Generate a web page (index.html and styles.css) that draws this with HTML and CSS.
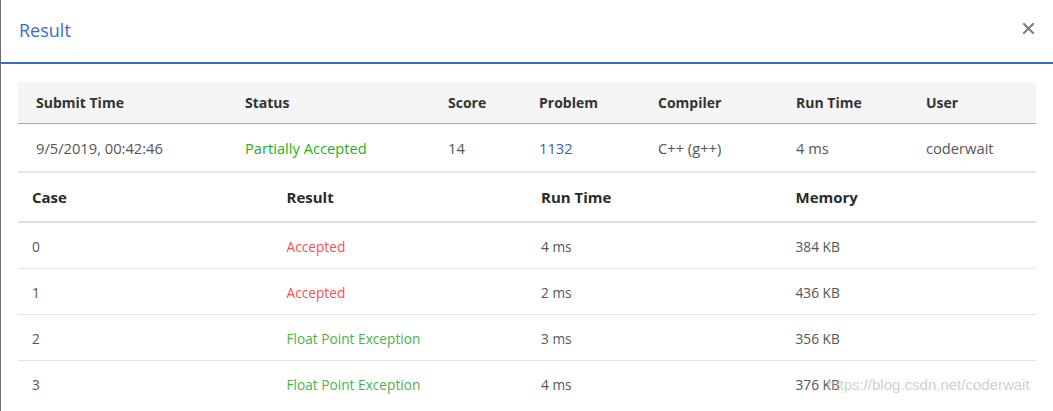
FILE: index.html
```html
<!DOCTYPE html>
<html>
<head>
<meta charset="utf-8">
<link rel="stylesheet" href="styles.css">
</head>
<body>
<div class="modal">
  <div class="modal-header">
    <span class="title">Result</span>
    <svg class="close" width="11" height="11" viewBox="0 0 11 11"><path d="M1 1L10 10M10 1L1 10" stroke="#7a7a7a" stroke-width="2" stroke-linecap="square" fill="none"/></svg>
  </div>
  <div class="modal-body">
    <table class="summary">
      <colgroup>
        <col class="c1"><col class="c2"><col class="c3"><col class="c4"><col class="c5"><col class="c6"><col class="c7">
      </colgroup>
      <thead>
        <tr><th>Submit Time</th><th>Status</th><th>Score</th><th>Problem</th><th>Compiler</th><th>Run Time</th><th>User</th></tr>
      </thead>
      <tbody>
        <tr><td>9/5/2019, 00:42:46</td><td class="partial">Partially Accepted</td><td>14</td><td class="link">1132</td><td>C++ (g++)</td><td>4 ms</td><td>coderwait</td></tr>
      </tbody>
    </table>
    <table class="cases">
      <thead>
        <tr><th>Case</th><th>Result</th><th>Run Time</th><th>Memory</th></tr>
      </thead>
      <tbody>
        <tr><td>0</td><td class="ac">Accepted</td><td>4 ms</td><td>384 KB</td></tr>
        <tr><td>1</td><td class="ac">Accepted</td><td>2 ms</td><td>436 KB</td></tr>
        <tr><td>2</td><td class="fpe">Float Point Exception</td><td>3 ms</td><td>356 KB</td></tr>
        <tr><td>3</td><td class="fpe">Float Point Exception</td><td>4 ms</td><td>376 KB</td></tr>
      </tbody>
    </table>
  </div>
  <div class="watermark">https://blog.csdn.net/coderwait</div>
</div>
</body>
</html>
```

FILE: styles.css
```css
html, body {
  margin: 0;
  padding: 0;
  background: #fff;
}
body {
  font-family: "Open Sans", "Noto Sans", sans-serif;
  color: #444;
}
.modal {
  position: relative;
  width: 1052px;
  height: 411px;
  border-left: 1px solid #6e6e6e;
  overflow: hidden;
}
.modal-header {
  height: 64px;
  border-bottom: 2px solid #3b6cc5;
  display: flex;
  align-items: center;
  justify-content: space-between;
  padding: 0 19px 0 18px;
  box-sizing: border-box;
}
.title {
  font-size: 18px;
  color: #3d6bc4;
  margin-top: -2px;
}
.close {
  display: block;
  margin-top: -6px;
}
.modal-body {
  padding: 18px 16px 0 17px;
}
table {
  width: 1018px;
  border-collapse: collapse;
  table-layout: fixed;
}
.summary thead tr {
  background: #f5f5f5;
}
.summary th {
  height: 41px;
  text-align: left;
  font-size: 14px;
  font-weight: 700;
  color: #333;
  padding: 0;
  border-bottom: 1px solid #aaa;
}
.summary td {
  height: 47px;
  font-size: 14.7px;
  color: #555;
  padding: 0;
  border-bottom: 2px solid #e4e4e4;
}
.summary th:first-child,
.summary td:first-child {
  padding-left: 18px;
}
.c1 { width: 227px; }
.c2 { width: 203px; }
.c3 { width: 91px; }
.c4 { width: 119px; }
.c5 { width: 138px; }
.c6 { width: 130px; }
.c7 { width: 110px; }
.summary td.partial { color: #1eb11e; }
.summary td.link { color: #2e63b0; }
.cases th {
  height: 48px;
  text-align: left;
  font-size: 15px;
  font-weight: 700;
  color: #2a2a2a;
  padding: 0 0 0 14px;
  border-bottom: 2px solid #dedee2;
}
.cases td {
  height: 43px;
  font-size: 13.7px;
  color: #555;
  padding: 2px 0 0 14px;
  border-bottom: 1px solid #e3e3e3;
}
.cases tbody tr:last-child td {
  border-bottom: none;
}
.cases td.ac { color: #f4524c; }
.cases td.fpe { color: #4cb24c; }
.watermark {
  position: absolute;
  left: 826px;
  top: 376px;
  font-family: "Liberation Sans", Arial, sans-serif;
  font-size: 15px;
  color: rgba(190, 190, 190, 0.75);
}
```
